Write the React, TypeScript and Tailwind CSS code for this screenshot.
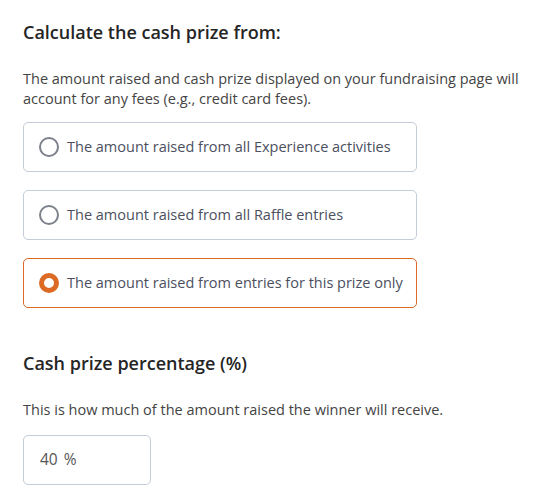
import { useState } from 'react';

const options = [
  'The amount raised from all Experience activities',
  'The amount raised from all Raffle entries',
  'The amount raised from entries for this prize only',
];

export default function App() {
  const [selected, setSelected] = useState(2);

  return (
    <div className="w-[536px] h-[498px] bg-white px-[23px] pt-[20px] font-['Open_Sans',sans-serif] text-[#333]">
      {/* Source of the cash prize */}
      <h2 className="text-[18px] leading-6 font-semibold text-[#252525]">Calculate the cash prize from:</h2>
      <p className="mt-[25px] text-[14.5px] leading-5 text-[#444] w-[500px]">
        The amount raised and cash prize displayed on your fundraising page will account for any fees (e.g., credit card fees).
      </p>

      <div className="mt-[13px] flex flex-col gap-[18px]">
        {options.map((label, i) => {
          const active = i === selected;
          return (
            <button
              key={label}
              onClick={() => setSelected(i)}
              className={
                active
                  ? 'w-[394px] h-[50px] flex items-center gap-[8px] pl-[15px] rounded-[5px] border border-[#dc6a24] bg-white text-left'
                  : 'w-[394px] h-[50px] flex items-center gap-[8px] pl-[15px] rounded-[5px] border border-[#c3ccd8] bg-white text-left'
              }
            >
              {active ? (
                <span className="w-5 h-5 rounded-full border-[5px] border-[#dc6a24] bg-white" />
              ) : (
                <span className="w-5 h-5 rounded-full border-2 border-[#7d818c] bg-white" />
              )}
              <span className="text-[14.5px] text-[#4b4f5e]">{label}</span>
            </button>
          );
        })}
      </div>

      {/* Percentage */}
      <h2 className="mt-[43px] text-[18px] leading-6 font-semibold text-[#252525]">Cash prize percentage (%)</h2>
      <p className="mt-[25px] text-[14.5px] leading-5 text-[#444]">
        This is how much of the amount raised the winner will receive.
      </p>
      <div className="mt-[15px] w-[128px] h-[50px] flex items-center gap-[6px] pl-[16px] rounded-[5px] border border-[#c3ccd8] text-[15.5px] text-[#555]">
        <span>40</span>
        <span>%</span>
      </div>
    </div>
  );
}
